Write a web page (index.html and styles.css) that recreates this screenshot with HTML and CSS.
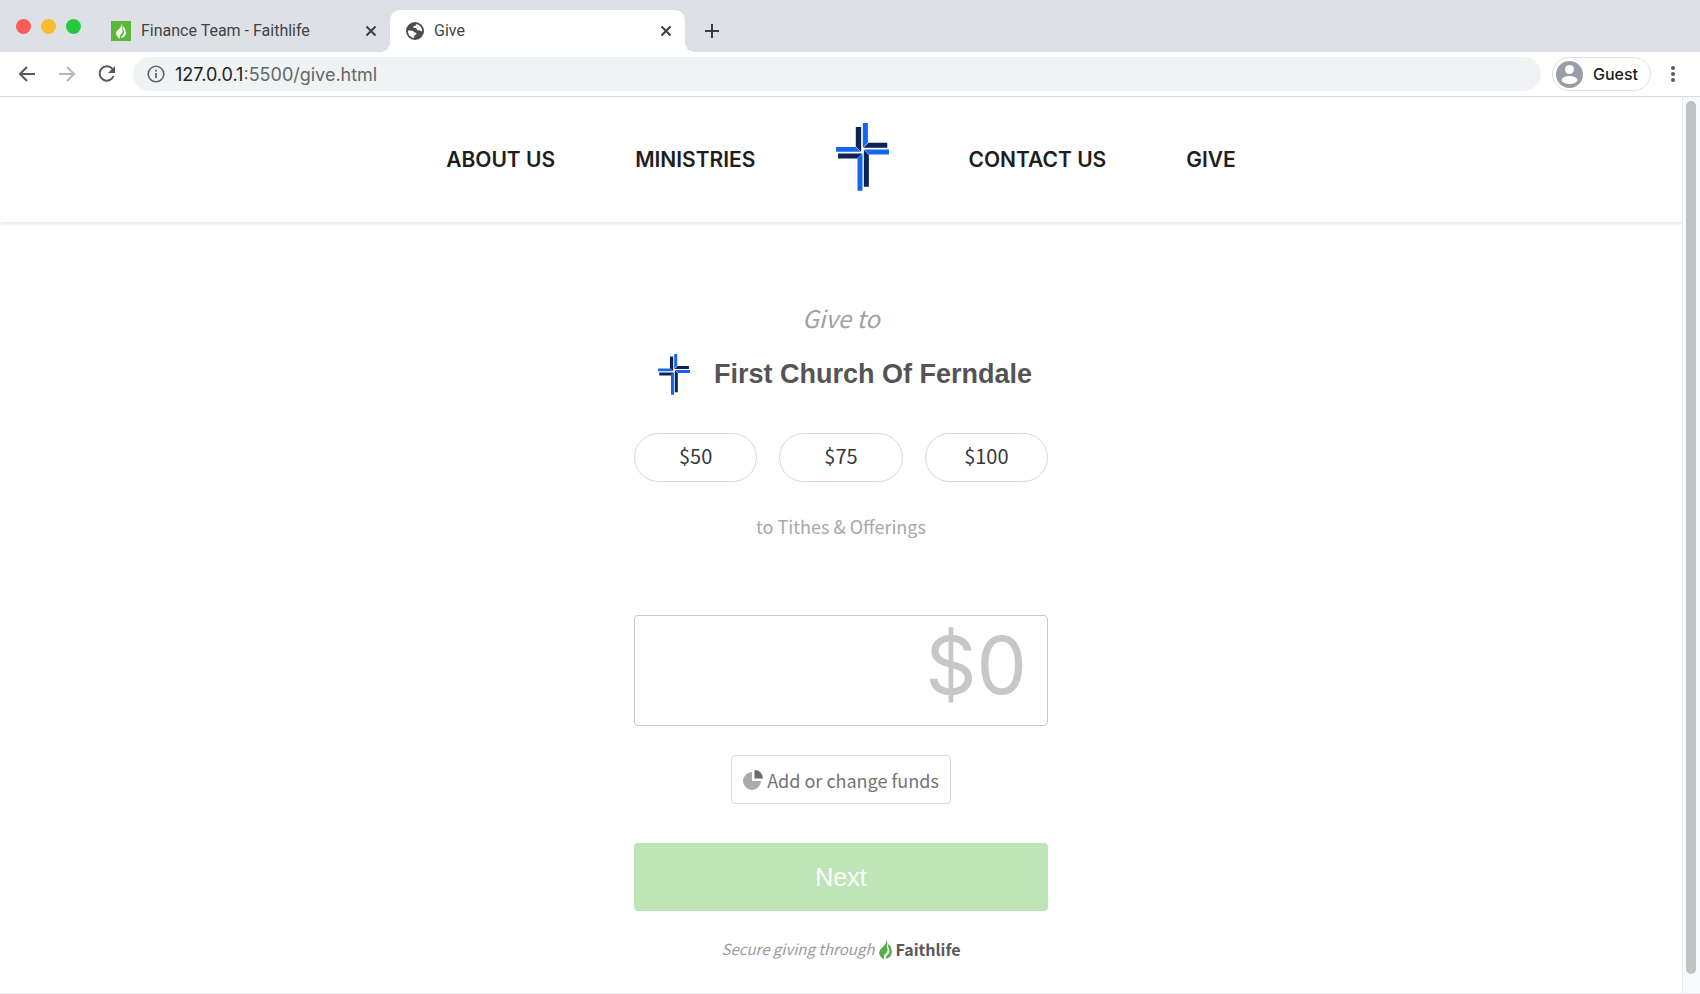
FILE: index.html
```html
<!DOCTYPE html>
<html lang="en">
<head>
<meta charset="utf-8">
<title>Give</title>
<link rel="stylesheet" href="styles.css">
</head>

<body>
<!-- shared shapes -->
<svg class="defs" aria-hidden="true">
  <symbol id="cross" viewBox="0 0 158 203">
    <path fill="#0d2257" d="M59 12h16v74L59 70zM97 59h56v15H81zM83 80l15 15v95H83zM6 91h72l-15 15H6z"/>
    <path fill="#1267ec" d="M80 0h15v58L80 73zM84 79h74v15h-59zM79 90v112H64v-97zM0 72h59l15 14H0z"/>
  </symbol>
  <symbol id="flame" viewBox="0 0 40 64">
    <path d="M22 0c3 10-3 17-10 24C4 30-1 37 1 46c2 8 8 13 16 17-4-9-2-14 4-19 7-6 7-13 3-20 3-9 2-17-2-24zM29 14c9 9 13 22 9 33-3 8-10 12-18 12 0-6 6-9 9-13 5-8 3-17-2-24 2-2 2-5 2-8z"/>
  </symbol>
  <symbol id="close" viewBox="0 0 12 12">
    <path d="M1.500 1.500l9 9M10.500 1.500l-9 9" fill="none" stroke="#3c4043" stroke-width="2"/>
  </symbol>
</svg>

<div class="browser">
  <div class="tabs">
    <div class="lights">
      <span class="light red"></span>
      <span class="light yellow"></span>
      <span class="light green"></span>
    </div>
    <div class="tab">
      <span class="favicon"><svg width="10" height="16"><use href="#flame"/></svg></span>
      <span class="tab-name">Finance Team - Faithlife</span>
      <button class="icon-btn" aria-label="Close tab"><svg width="12" height="12"><use href="#close"/></svg></button>
    </div>
    <div class="tab active">
      <svg width="18" height="18" viewBox="0 0 18 18"><circle cx="9" cy="9" r="9" fill="#494c50"/><path fill="#fff" d="M11 2.200c-1 0-1.500.7-1.400 1.600-.8.200-2 .1-2.300 1-.2.800.5 1.300 1.200 1.300 1.200.1 2.300.2 2.500 1.300.1.900.9 1.200 1.600.9.900-.4 1.500.1 2.300.7.500.3.900.2 1.200-.1C16.100 5.800 14.200 3 11 2.200zM2 8.400c1.700.1 3.800-.1 5 .5 1.100.5.900 1.500 2 1.600 1.300.2 1.700 1 1.300 1.800-.4.900-1.700.7-1.900 1.600-.1.700-.2 1.400-.8 2C4.300 15.200 1.800 12.300 2 8.400z"/></svg>
      <span class="tab-name">Give</span>
      <button class="icon-btn" aria-label="Close tab"><svg width="12" height="12"><use href="#close"/></svg></button>
    </div>
    <button class="icon-btn new-tab" aria-label="New tab"><svg width="16" height="16" viewBox="0 0 16 16"><path d="M8 1v14M1 8h14" stroke="#3c4043" stroke-width="2"/></svg></button>
  </div>

  <div class="toolbar">
    <div class="history">
      <button class="icon-btn" aria-label="Back"><svg width="18" height="18" viewBox="0 0 18 18" fill="none" stroke="#55595e" stroke-width="2"><path d="M17 9H2M9 2L2 9l7 7"/></svg></button>
      <button class="icon-btn" aria-label="Forward"><svg width="18" height="18" viewBox="0 0 18 18" fill="none" stroke="#b4b7ba" stroke-width="2"><path d="M1 9h15M9 2l7 7-7 7"/></svg></button>
      <button class="icon-btn" aria-label="Reload"><svg width="18" height="18" viewBox="0 0 18 18"><path d="M14.500 4A7.200 7.200 0 1 0 15.600 11" fill="none" stroke="#55595e" stroke-width="2"/><path fill="#55595e" d="M17 1v7h-7z"/></svg></button>
    </div>
    <div class="address">
      <svg width="18" height="18" viewBox="0 0 18 18"><circle cx="9" cy="9" r="7.800" fill="none" stroke="#5f6368" stroke-width="1.600"/><path d="M9 8v5M9 4.800v1.800" stroke="#5f6368" stroke-width="1.800"/></svg>
      <span class="url"><b>127.0.0.1</b>:5500/give.html</span>
    </div>
    <button class="profile">
      <svg width="27" height="27" viewBox="0 0 27 27"><circle cx="13.500" cy="13.500" r="13.500" fill="#989ea6"/><circle cx="13.500" cy="8.500" r="4.500" fill="#fff"/><ellipse cx="13.500" cy="19" rx="8" ry="4" fill="#fff"/></svg>
      Guest
    </button>
    <button class="icon-btn" aria-label="Menu"><svg width="4" height="16" viewBox="0 0 4 16" fill="#55595e"><circle cx="2" cy="2" r="2"/><circle cx="2" cy="8" r="2"/><circle cx="2" cy="14" r="2"/></svg></button>
  </div>

  <div class="viewport">
    <div class="page">
      <header class="site-header">
        <nav class="nav">
          <a href="#">ABOUT US</a>
          <a href="#">MINISTRIES</a>
          <a href="#" class="logo" aria-label="Home"><svg width="53" height="68"><use href="#cross"/></svg></a>
          <a href="#">CONTACT US</a>
          <a href="#">GIVE</a>
        </nav>
      </header>

      <main class="give">
        <p class="give-to">Give to</p>
        <h1 class="church">
          <svg width="32" height="41"><use href="#cross"/></svg>
          First Church Of Ferndale
        </h1>
        <div class="amounts">
          <button class="amount">$50</button>
          <button class="amount">$75</button>
          <button class="amount">$100</button>
        </div>
        <p class="fund">to Tithes &amp; Offerings</p>
        <input class="total" type="text" placeholder="$0" aria-label="Amount">
        <button class="funds">
          <svg width="20" height="20" viewBox="0 0 20 20"><path fill="#ababab" d="M9 2v9h9a9 9 0 1 1-9-9z"/><path fill="#6b6b6d" d="M11.500 0a8.500 8.500 0 0 1 8.500 8.500h-8.500z"/></svg>
          Add or change funds
        </button>
        <button class="next">Next</button>
        <p class="secure">
          <i>Secure giving through</i>
          <svg class="flame" width="13" height="21"><use href="#flame"/></svg>
          <b>Faithlife</b>
        </p>
      </main>
    </div>
    <div class="scrollbar"><div class="thumb"></div></div>
  </div>
</div>
</body>
</html>
```
FILE: styles.css
```css
* {
  box-sizing: border-box;
}

body {
  margin: 0;
  background: #fff;
  font-family: "Noto Sans CJK SC", "Open Sans", sans-serif;
}

p {
  margin: 0;
}

button {
  font: inherit;
  padding: 0;
  border: 0;
  background: none;
}

svg {
  display: block;
  flex: none;
}

.defs {
  position: absolute;
  width: 0;
  height: 0;
}

.browser {
  display: flex;
  flex-direction: column;
  height: 100vh;
}

/* tab strip */
.tabs {
  display: flex;
  height: 52px;
  padding: 10px 0 0 16px;
  background: #dde1e6;
  font: 16px/20px Roboto, sans-serif;
  color: #3f4347;
}

.lights {
  display: flex;
  gap: 10px;
  padding-top: 9px;
}

.light {
  width: 15px;
  height: 15px;
  border-radius: 50%;
}

.red {
  background: #fc5b57;
}

.yellow {
  background: #fdbc2e;
}

.green {
  background: #27c840;
}

.tab {
  display: flex;
  align-items: center;
  gap: 10px;
  width: 295px;
  padding: 0 13px 0 16px;
}

.tab:not(.active) {
  padding-left: 30px;
  width: 309px;
}

.active {
  position: relative;
  background: #fff;
  border-radius: 10px 10px 0 0;
}

/* flared feet of the active tab */
.active::before,
.active::after {
  content: "";
  position: absolute;
  bottom: 0;
  width: 10px;
  height: 10px;
}

.active::before {
  right: 100%;
  background: radial-gradient(circle at 0 0, #dde1e6 10px, #fff 10px);
}

.active::after {
  left: 100%;
  background: radial-gradient(circle at 100% 0, #dde1e6 10px, #fff 10px);
}

.tab-name {
  flex: 1;
  white-space: nowrap;
}

.favicon {
  display: flex;
  align-items: center;
  justify-content: center;
  width: 20px;
  height: 20px;
  background: #5bb738;
  fill: #fff;
}

.new-tab {
  margin-left: 19px;
}

/* toolbar */
.toolbar {
  display: flex;
  align-items: center;
  gap: 11px;
  height: 45px;
  padding: 0 25px 0 18px;
  border-bottom: 1px solid #d9dbdd;
  font-family: Inter, sans-serif;
}

.history {
  display: flex;
  gap: 22px;
  margin-right: 6px;
}

.address {
  flex: 1;
  display: flex;
  align-items: center;
  gap: 10px;
  height: 34px;
  padding: 0 14px;
  border-radius: 17px;
  background: #f0f3f4;
  font-size: 18px;
  color: #62666a;
}

.url b {
  font-weight: 400;
  color: #202124;
}

.profile {
  display: flex;
  align-items: center;
  gap: 10px;
  height: 34px;
  margin-right: 9px;
  padding: 0 12px 0 3px;
  border: 1px solid #dfe1e4;
  border-radius: 17px;
  font-size: 16px;
  font-weight: 500;
  color: #202124;
}

/* page */
.viewport {
  flex: 1;
  display: flex;
  min-height: 0;
  border-bottom: 1px solid #ececee;
}

.page {
  flex: 1;
  overflow: hidden;
}

.scrollbar {
  width: 18px;
  padding: 4px 4px 19px 3px;
  background: #f9fafb;
  border-left: 1px solid #e8eaec;
}

.thumb {
  width: 10px;
  height: 100%;
  border-radius: 5px;
  background: #c0c1c3;
}

.site-header {
  height: 125px;
  box-shadow: 0 1px 4px rgba(0, 0, 0, 0.14);
}

.nav {
  display: flex;
  align-items: center;
  justify-content: center;
  gap: 80px;
  height: 100%;
}

.nav a {
  font: 600 21px/24px Inter, sans-serif;
  color: #1c1e20;
  text-decoration: none;
}

.nav .logo {
  margin-bottom: 6px;
}

.give {
  display: flex;
  flex-direction: column;
  align-items: center;
  width: 414px;
  margin: 0 auto;
  padding-top: 76px;
}

.give-to {
  font-size: 24px;
  line-height: 40px;
  font-style: italic;
  color: #a0a1a3;
}

.church {
  display: flex;
  align-items: center;
  gap: 24px;
  margin: 16px 0 38px;
  padding-left: 8px;
  font: bold 27px/41px "Liberation Sans", Arial, sans-serif;
  color: #555354;
  white-space: nowrap;
}

.amounts {
  display: grid;
  grid-template-columns: repeat(3, 1fr);
  gap: 22px;
  width: 100%;
}

.amount {
  height: 49px;
  padding-bottom: 4px;
  border: 1px solid #d8d8da;
  border-radius: 25px;
  font-size: 20px;
  line-height: 40px;
  color: #37383b;
}

.fund {
  margin-top: 29px;
  font-size: 18px;
  line-height: 30px;
  color: #a6a8aa;
}

.total {
  width: 100%;
  height: 111px;
  margin: 74px 0 29px;
  padding: 0 20px 12px;
  border: 1px solid #c6c8ca;
  border-radius: 4px;
  font: 400 80px/96px Inter, sans-serif;
  text-align: right;
}

.total::placeholder {
  color: #c6c7c9;
  opacity: 1;
}

.funds {
  display: flex;
  align-items: center;
  gap: 4px;
  height: 49px;
  padding: 0 11px;
  border: 1px solid #d8dadd;
  border-radius: 4px;
  font-size: 18px;
  color: #737476;
}

.next {
  width: 100%;
  height: 68px;
  margin: 39px 0 23px;
  border-radius: 4px;
  background: #bee5b6;
  font: 25px/30px "Liberation Sans", Arial, sans-serif;
  color: #fff;
}

.secure {
  display: flex;
  align-items: center;
  gap: 4px;
  font-size: 15px;
  line-height: 30px;
  color: #98999b;
}

.secure b {
  font-size: 16px;
  line-height: 24px;
  color: #58595b;
}

.flame {
  fill: #55ad45;
}
```
